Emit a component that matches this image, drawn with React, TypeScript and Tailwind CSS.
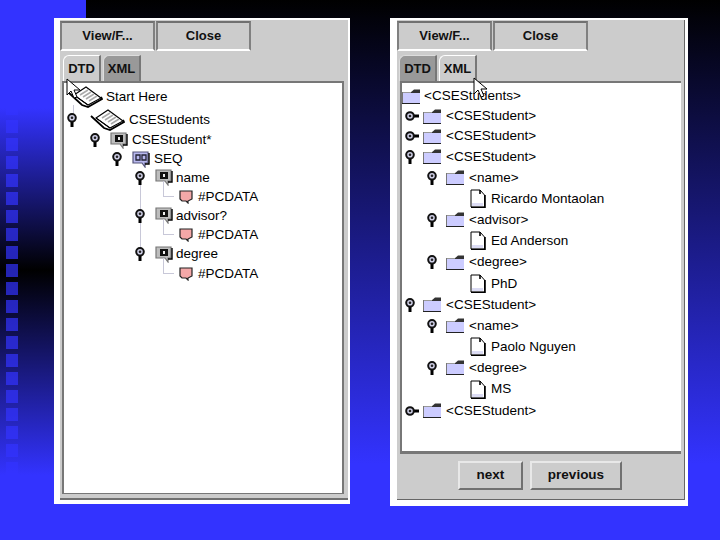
/**
 * Two tree viewer windows (DTD and XML tabs) on a blue slide background.
 */
import clsx from 'clsx'

type Kind = 'book' | 'element' | 'seq' | 'pcdata' | 'folder' | 'doc'

type Row = {
  label: string
  kind: Kind
  height: string
  indent: string
  handle?: 'down' | 'right'
  gap: string
  textGap: string
}

const DTD_ROWS: Row[] = [
  { label: 'Start Here', kind: 'book', height: 'h-[26px]', indent: 'pl-[3px]', gap: 'ml-0', textGap: 'ml-[3px]' },
  { label: 'CSEStudents', kind: 'book', height: 'h-[20px]', indent: 'pl-[3px]', handle: 'down', gap: 'ml-[12px]', textGap: 'ml-[4px]' },
  { label: 'CSEStudent*', kind: 'element', height: 'h-[20px]', indent: 'pl-[26px]', handle: 'down', gap: 'ml-[10px]', textGap: 'ml-[4px]' },
  { label: 'SEQ', kind: 'seq', height: 'h-[18px]', indent: 'pl-[48px]', handle: 'down', gap: 'ml-[10px]', textGap: 'ml-[4px]' },
  { label: 'name', kind: 'element', height: 'h-[19px]', indent: 'pl-[71px]', handle: 'down', gap: 'ml-[10px]', textGap: 'ml-[3px]' },
  { label: '#PCDATA', kind: 'pcdata', height: 'h-[19px]', indent: 'pl-[115px]', gap: 'ml-0', textGap: 'ml-[5px]' },
  { label: 'advisor?', kind: 'element', height: 'h-[19px]', indent: 'pl-[71px]', handle: 'down', gap: 'ml-[10px]', textGap: 'ml-[3px]' },
  { label: '#PCDATA', kind: 'pcdata', height: 'h-[19px]', indent: 'pl-[115px]', gap: 'ml-0', textGap: 'ml-[5px]' },
  { label: 'degree', kind: 'element', height: 'h-[20px]', indent: 'pl-[71px]', handle: 'down', gap: 'ml-[10px]', textGap: 'ml-[3px]' },
  { label: '#PCDATA', kind: 'pcdata', height: 'h-[19px]', indent: 'pl-[115px]', gap: 'ml-0', textGap: 'ml-[5px]' },
]

const studentRow = (handle: 'down' | 'right', height = 'h-[20px]'): Row => ({
  label: '<CSEStudent>',
  kind: 'folder',
  height,
  indent: 'pl-[3px]',
  handle,
  gap: handle === 'right' ? 'ml-[4px]' : 'ml-[8px]',
  textGap: 'ml-[5px]',
})

const tagRow = (label: string, height = 'h-[21px]'): Row => ({
  label,
  kind: 'folder',
  height,
  indent: 'pl-[25px]',
  handle: 'down',
  gap: 'ml-[9px]',
  textGap: 'ml-[5px]',
})

const docRow = (label: string, height = 'h-[21px]'): Row => ({
  label,
  kind: 'doc',
  height,
  indent: 'pl-[68px]',
  gap: 'ml-0',
  textGap: 'ml-[5px]',
})

const XML_ROWS: Row[] = [
  { label: '<CSEStudents>', kind: 'folder', height: 'h-[20px]', indent: 'pl-0', gap: 'ml-0', textGap: 'ml-[4px]' },
  studentRow('right'),
  studentRow('right'),
  studentRow('down', 'h-[21px]'),
  tagRow('<name>'),
  docRow('Ricardo Montaolan'),
  tagRow('<advisor>'),
  docRow('Ed Anderson'),
  tagRow('<degree>', 'h-[22px]'),
  docRow('PhD'),
  studentRow('down', 'h-[21px]'),
  tagRow('<name>'),
  docRow('Paolo Nguyen'),
  tagRow('<degree>'),
  docRow('MS', 'h-[22px]'),
  studentRow('right', 'h-[21px]'),
]

function Handle({ direction }: { direction: 'down' | 'right' }) {
  if (direction === 'right') {
    return (
      <svg width="14" height="10" viewBox="0 0 14 10" className="shrink-0">
        <rect x="8" y="3.5" width="6" height="3" fill="#000" />
        <circle cx="5" cy="5" r="3.8" fill="#d0d0e8" stroke="#111" strokeWidth="2" />
        <circle cx="5" cy="5" r="1.3" fill="#222" />
      </svg>
    )
  }
  return (
    <svg width="10" height="14" viewBox="0 0 10 14" className="shrink-0">
      <rect x="3.5" y="7" width="3" height="7" fill="#000" />
      <circle cx="5" cy="4.8" r="3.8" fill="#d0d0e8" stroke="#111" strokeWidth="2" />
      <circle cx="5" cy="4.8" r="1.3" fill="#222" />
    </svg>
  )
}

function BookIcon() {
  return (
    <svg width="36" height="22" viewBox="0 0 36 22" className="shrink-0">
      <path d="M2 7 L15 19 L21 21 L35 13 L34 11" fill="none" stroke="#000" strokeWidth="1.8" />
      <polygon points="7,9 19,1 34,12 21,19" fill="#fff" stroke="#000" strokeWidth="1.1" />
      <path d="M13 9 L21 4 M16 11 L24 6 M19 13 L27 8 M22 15 L30 10" stroke="#aaa" strokeWidth="1.6" />
      <path d="M7 9 L21 19" stroke="#000" strokeWidth="1" />
    </svg>
  )
}

function TagIcon({ kind }: { kind: 'element' | 'seq' | 'pcdata' }) {
  if (kind === 'pcdata') {
    return (
      <svg width="14" height="15" viewBox="0 0 14 15" className="shrink-0">
        <path d="M1 2 H13 V10 L9 12 V14 L7 12 H3 L1 10 Z" fill="#f4a8a8" stroke="#222" strokeWidth="1.2" />
      </svg>
    )
  }
  return (
    <svg width="18" height="17" viewBox="0 0 18 17" className="shrink-0">
      <path
        d="M1 1 H16 V12 H13 V16 L10 12 H1 Z"
        fill={kind === 'seq' ? '#b8b8ee' : '#bdbdbd'}
        stroke={kind === 'seq' ? '#55557a' : '#777'}
        strokeWidth="1.2"
      />
      <path d="M17 2 V13 H13" fill="none" stroke="#000" strokeWidth="1.4" />
      {kind === 'seq' ? (
        <path d="M4 4 H8 V9 H4 Z M10 4 H14 V9 H10 Z" fill="none" stroke="#223" strokeWidth="1.3" />
      ) : (
        <>
          <rect x="5" y="3" width="8" height="7" fill="#111" />
          <rect x="8" y="5" width="2" height="3" fill="#eee" />
        </>
      )}
    </svg>
  )
}

function FolderIcon() {
  return (
    <svg width="18" height="15" viewBox="0 0 18 15" className="shrink-0">
      <rect x="1" y="3" width="17" height="11" fill="#ccccff" />
      <path d="M8 4 L12 0.5 H18 V4 Z" fill="#333" />
      <path d="M0.5 3 V14" stroke="#777" strokeWidth="1" />
      <path d="M1 3.5 H9" stroke="#999" strokeWidth="1" />
      <path d="M0 14.5 H18" stroke="#222" strokeWidth="1" />
    </svg>
  )
}

function DocIcon() {
  return (
    <svg width="16" height="19" viewBox="0 0 16 19" className="shrink-0">
      <path d="M1 1 H10 L14.5 6 V18 H1 Z" fill="#fff" stroke="#000" strokeWidth="1" />
      <path d="M15 6 V18.5 H1" fill="none" stroke="#000" strokeWidth="1.6" />
      <path d="M10 1 V5" stroke="#000" strokeWidth="1.6" />
      <rect x="2" y="14" width="11" height="3" fill="#dcdcf4" />
    </svg>
  )
}

function RowIcon({ kind }: { kind: Kind }) {
  if (kind === 'book') return <BookIcon />
  if (kind === 'folder') return <FolderIcon />
  if (kind === 'doc') return <DocIcon />
  return <TagIcon kind={kind} />
}

function TreeRow({ row }: { row: Row }) {
  return (
    <div className={clsx('relative flex items-center', row.height, row.indent)}>
      {row.kind === 'pcdata' ? (
        <div className="absolute left-[99px] top-[-6px] h-[16px] w-[11px] border-b border-l border-[#c8c8d8]" />
      ) : null}
      {row.handle ? <Handle direction={row.handle} /> : null}
      <div className={row.gap}>
        <RowIcon kind={row.kind} />
      </div>
      <span className={clsx('whitespace-pre text-[13.5px] leading-none text-black', row.textGap)}>
        {row.label}
      </span>
    </div>
  )
}

function ToolButton({ label }: { label: string }) {
  return (
    <div className="flex h-[30px] w-[95px] items-center justify-center border-x-2 border-b-2 border-t-2 border-x-[#808080] border-b-white border-t-[#707070] bg-[#cccccc] text-[13px] font-bold text-[#111]">
      {label}
    </div>
  )
}

function Tab({ label, active }: { label: string; active?: boolean }) {
  return (
    <div
      className={clsx(
        'flex h-[26px] w-[38px] items-center justify-center rounded-tl-[6px] border-l border-r-2 border-t text-[13px] font-bold text-[#111]',
        active
          ? 'border-l-white border-r-[#777] border-t-white bg-[#cccccc]'
          : 'border-l-[#ddd] border-r-[#777] border-t-[#ddd] bg-[#999999]',
      )}
    >
      {label}
    </div>
  )
}

function PushButton({ label, width }: { label: string; width: string }) {
  return (
    <div
      className={clsx(
        'flex h-[29px] items-center justify-center border-2 border-b-[#707070] border-l-[#e8e8e8] border-r-[#707070] border-t-[#e8e8e8] text-[13.5px] font-bold text-[#111]',
        width,
      )}
    >
      {label}
    </div>
  )
}

function Cursor({ className }: { className: string }) {
  return (
    <svg width="15" height="21" viewBox="0 0 15 21" className={clsx('absolute', className)}>
      <path d="M1 1 V17 L5 13 L8 20 L11 19 L8 12 H14 Z" fill="#fff" stroke="#000" strokeWidth="1" />
    </svg>
  )
}

function Toolbar() {
  return (
    <div className="flex gap-px pt-px">
      <ToolButton label="View/F..." />
      <ToolButton label="Close" />
    </div>
  )
}

export default function App() {
  const squares = Array.from({ length: 27 }, (_, i) => i)

  return (
    <div className="relative flex h-[540px] w-[720px] items-start gap-[40px] overflow-hidden bg-[linear-gradient(180deg,#000000_0%,#3333ff_86%)] pl-[54px] pt-[18px] font-['Liberation_Sans',Arial,sans-serif]">
      <div className="absolute inset-y-0 left-0 flex w-[86px] flex-col gap-[5px] bg-[linear-gradient(180deg,#3333ff_0%,#3333ff_20%,#000000_50%,#3333ff_88%)] pl-[6px] pt-[12px]">
        {squares.map((i) => (
          <div key={i} className="h-[13px] w-[12px] shrink-0 bg-[#3333ff]/70" />
        ))}
      </div>

      <div className="relative h-[486px] w-[296px] bg-white pb-[4px] pl-[6px] pr-[2px] pt-[2px]">
        <div className="flex h-full flex-col border-b-2 border-[#707070] bg-[#cccccc]">
          <Toolbar />
          <div className="mt-[4px] flex gap-[2px] pl-[3px]">
            <Tab label="DTD" active />
            <Tab label="XML" />
          </div>
          <div className="relative mb-[4px] ml-[2px] mr-[4px] min-h-0 flex-1 border-2 border-b border-[#777] bg-white pt-px">
            <div className="absolute left-[76px] top-[100px] h-[67px] w-px bg-[#c8c8d8]" />
            <div className="absolute left-[9px] top-[22px] h-[8px] w-px bg-[#c8c8d8]" />
            {DTD_ROWS.map((row, i) => (
              <TreeRow key={i} row={row} />
            ))}
          </div>
        </div>
        <Cursor className="left-[12px] top-[60px]" />
      </div>

      <div className="relative h-[488px] w-[298px] bg-white pb-[6px] pl-[7px] pr-[3px] pt-[2px]">
        <div className="flex h-full flex-col border-b border-r border-[#666] bg-[#cccccc]">
          <Toolbar />
          <div className="mt-[4px] flex gap-[2px] pl-[2px]">
            <Tab label="DTD" />
            <Tab label="XML" active />
          </div>
          <div className="mx-[3px] h-[373px] border-2 border-b-[3px] border-r-0 border-[#777] bg-white pt-[3px]">
            {XML_ROWS.map((row, i) => (
              <TreeRow key={i} row={row} />
            ))}
          </div>
          <div className="flex flex-1 items-start justify-start gap-[7px] pl-[61px] pt-[7px]">
            <PushButton label="next" width="w-[65px]" />
            <PushButton label="previous" width="w-[92px]" />
          </div>
        </div>
        <Cursor className="left-[83px] top-[59px]" />
      </div>
    </div>
  )
}
